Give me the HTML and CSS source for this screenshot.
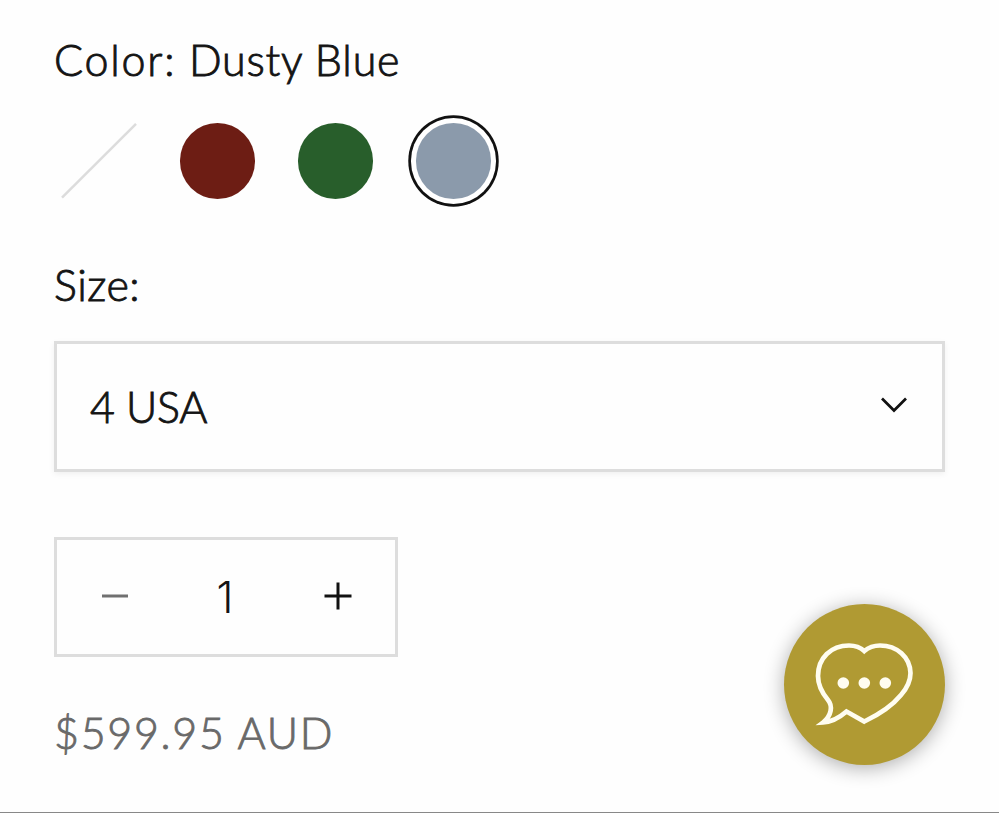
FILE: index.html
```html
<!DOCTYPE html>
<html lang="en">
<head>
<meta charset="utf-8">
<title>Product options</title>
<link rel="stylesheet" href="styles.css">
</head>
<body>
<main class="product">
  <div class="label label-color"><span class="label-name">Color:</span> Dusty Blue</div>
  <div class="swatches">
    <span class="swatch"><svg viewBox="0 0 76 76"><path d="M0 75 74.500 .8" fill="none" stroke="#dcdcdc" stroke-width="2.500"/></svg></span>
    <span class="swatch red"></span>
    <span class="swatch green"></span>
    <span class="swatch blue selected"></span>
  </div>
  <div class="label label-size">Size:</div>
  <div class="select">
    <span class="select-value">4 USA</span>
    <svg class="chevron" viewBox="0 0 28 18"><path d="M2 2.500 14 14.500 26 2.500" fill="none" stroke="#111" stroke-width="2.700"/></svg>
  </div>
  <div class="quantity">
    <svg class="sign" viewBox="0 0 28 28"><path d="M1 14H27" stroke="#707070" stroke-width="3"/></svg>
    <span class="count">1</span>
    <svg class="sign" viewBox="0 0 28 28"><path d="M.5 14H27.500M14 .5V27.500" stroke="#111" stroke-width="3"/></svg>
  </div>
  <div class="price">$599.95 AUD</div>
</main>
<div class="chat">
  <svg viewBox="0 0 161 161">
    <path d="M80.300 47C76 43 71 41.500 65 41.500C47 41.500 34 54 34 72C34 83 39 90 44 96C49 102 47.500 112 39 118.500C47 118 55 114 62.500 107.500L80.300 117.500C94 111 108 102 117 91C124 83 126.500 76 126.500 69C126 53 113 41.500 96 41.500C90 41.500 85 43 80.300 47Z" fill="none" stroke="#fffdf0" stroke-width="4.700"/>
    <g fill="#fffdf0"><circle cx="59.300" cy="79" r="5.800"/><circle cx="80.300" cy="79" r="5.800"/><circle cx="101.300" cy="79" r="5.800"/></g>
  </svg>
</div>
</body>
</html>
```
FILE: styles.css
```css
* { box-sizing: border-box; }
body {
  margin: 0;
  height: 813px;
  overflow: hidden;
  background: #fefefe;
  border-bottom: 1px solid #888;
  color: #141414;
  font: 300 43px/60px Lato, sans-serif;
  -webkit-text-stroke: 0.9px currentColor;
}
svg { display: block; overflow: visible; }
.product { padding: 30px 54px 0; }
.label { height: 60px; white-space: nowrap; }
.label-color { letter-spacing: 0.8px; }
.label-name { letter-spacing: 1.8px; }
.swatches {
  display: flex;
  gap: 42.5px;
  margin: 33px 0 0 7.5px;
}
.swatch { width: 75.5px; height: 75.5px; border-radius: 50%; }
.red { background: #6d1d14; }
.green { background: #285e2b; }
.blue { background: #8b9aab; }
.selected { box-shadow: 0 0 0 5px #fff, 0 0 0 7.7px #111; }
.label-size {
  margin-top: 56.5px;
  letter-spacing: 0.5px;
}
.select {
  display: flex;
  align-items: center;
  justify-content: space-between;
  height: 131px;
  margin-top: 26px;
  padding: 0 34px 0 33px;
  border: 3px solid #ddd;
  box-shadow: 0 2px 6px rgba(0, 0, 0, .06);
}
.select-value { letter-spacing: -0.3px; }
.chevron {
  width: 28px;
  height: 18px;
  margin-bottom: 3px;
}
.quantity {
  display: flex;
  align-items: center;
  justify-content: space-between;
  width: 344px;
  height: 120px;
  margin-top: 65px;
  padding: 0 43px 2px 44px;
  border: 3px solid #ddd;
}
.sign { width: 28px; height: 28px; }
.count {
  margin: 2px 3px 0 0;
  font-family: Inter, sans-serif;
  -webkit-text-stroke: 0;
}
.price {
  margin-top: 46px;
  color: #696969;
  letter-spacing: 1.7px;
  white-space: nowrap;
}
.chat {
  position: fixed;
  left: 784px;
  top: 604px;
  width: 161px;
  height: 161px;
  border-radius: 50%;
  background: #b09a33;
  box-shadow: 0 3px 20px rgba(0, 0, 0, .32);
}
```
